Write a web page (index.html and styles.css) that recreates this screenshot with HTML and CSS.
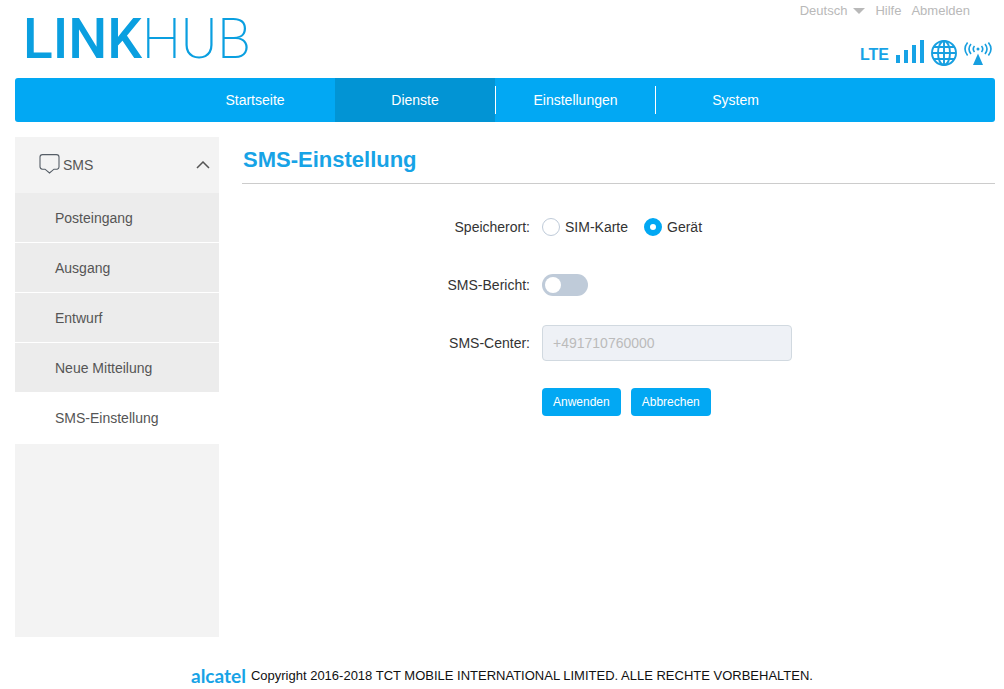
FILE: index.html
```html
<!DOCTYPE html>
<html lang="de">
<head>
<meta charset="utf-8">
<meta name="viewport" content="width=device-width, initial-scale=1">
<title>LINKHUB – SMS-Einstellung</title>
<link rel="stylesheet" href="styles.css">
</head>
<body>
<div class="page">
  <header class="header">
    <a class="logo" href="#"><span class="logo-bold">LINK</span><span class="logo-thin">HUB</span></a>
    <div class="header-side">
      <div class="tools">
        <button class="language" type="button">Deutsch
          <svg width="12" height="6" viewBox="0 0 12 6" aria-hidden="true"><path d="M0 0h12L6 6z" fill="#b9b9b9"/></svg>
        </button>
        <a href="#">Hilfe</a>
        <a href="#">Abmelden</a>
      </div>
      <div class="status">
        <span class="network">LTE</span>
        <svg width="28" height="28" viewBox="0 0 28 28" fill="#17a3e6" aria-hidden="true"><path d="M0 16h4v8H0zM8 11h4v13H8zM16 6h4v18h-4zM24 1h4v23h-4z"/></svg>
        <svg width="26" height="26" viewBox="0 0 26 26" fill="none" stroke="#179fe0" stroke-width="1.9" aria-hidden="true"><circle cx="13" cy="13" r="12"/><ellipse cx="13" cy="13" rx="6" ry="12"/><path d="M13 1v24M1 13h24M3 7h20M3 19h20"/></svg>
        <svg width="28" height="26" viewBox="0 0 28 26" fill="none" stroke="#179fe0" stroke-width="1.6" aria-hidden="true"><path d="M3.600 2.500Q-1.600 9 3.600 15.500M7 4Q3 9 7 14M10.500 6Q8 9 10.500 12M17.500 6Q20 9 17.500 12M21 4Q25 9 21 14M24.400 2.500Q29.600 9 24.400 15.500"/><circle cx="14" cy="9" r="1.500" fill="#179fe0" stroke="none"/><path d="M14 13.500L19 25H9z" fill="#179fe0" stroke="none"/></svg>
      </div>
    </div>
  </header>

  <nav class="nav" aria-label="Hauptmenü">
    <a class="nav-item" href="#">Startseite</a>
    <a class="nav-item active" href="#" aria-current="page">Dienste</a>
    <a class="nav-item" href="#">Einstellungen</a>
    <a class="nav-item" href="#">System</a>
  </nav>

  <div class="content">
    <aside class="sidebar">
      <button class="group" type="button" aria-expanded="true">
        <svg width="21" height="22" viewBox="0 0 21 22" fill="none" stroke="#555d66" stroke-width="1.100" aria-hidden="true"><path d="M3.500 .6h14q2.500 0 2.500 2.500v10q0 1.600-1.800 2.100h-3.200L10.500 19 6 15.200H3.500q-2.500-.5-2.500-2.500V3.100Q1 .6 3.500 .6z"/></svg>
        <span>SMS</span>
        <svg class="chevron" width="14" height="8" viewBox="0 0 14 8" fill="none" stroke="#555" stroke-width="1.500" aria-hidden="true"><path d="M1 7l6-6 6 6"/></svg>
      </button>
      <ul class="menu">
        <li><a href="#">Posteingang</a></li>
        <li><a href="#">Ausgang</a></li>
        <li><a href="#">Entwurf</a></li>
        <li><a href="#">Neue Mitteilung</a></li>
        <li><a class="current" href="#" aria-current="page">SMS-Einstellung</a></li>
      </ul>
    </aside>

    <main class="main">
      <h1 class="title">SMS-Einstellung</h1>
      <form class="form">
        <div class="row" role="radiogroup" aria-labelledby="storage">
          <span class="label" id="storage">Speicherort:</span>
          <div class="options">
            <label class="option"><input class="radio" type="radio" name="storage" value="sim">SIM-Karte</label>
            <label class="option"><input class="radio" type="radio" name="storage" value="device" checked>Gerät</label>
          </div>
        </div>
        <div class="row">
          <label class="label" for="report">SMS-Bericht:</label>
          <input class="switch" id="report" type="checkbox" role="switch">
        </div>
        <div class="row">
          <label class="label" for="center">SMS-Center:</label>
          <input class="field" id="center" type="text" value="+491710760000" disabled>
        </div>
        <div class="row">
          <div class="actions">
            <button class="button" type="submit">Anwenden</button>
            <button class="button" type="button">Abbrechen</button>
          </div>
        </div>
      </form>
    </main>
  </div>
</div>
<footer class="footer"><span class="brand">alcatel</span><span>Copyright 2016-2018 TCT MOBILE INTERNATIONAL LIMITED. ALLE RECHTE VORBEHALTEN.</span></footer>
</body>
</html>
```
FILE: styles.css
```css
* { box-sizing: border-box; }

body {
  margin: 0;
  background: #fff;
  color: #333;
  font-family: "Liberation Sans", Arial, sans-serif;
  font-size: 14px;
  line-height: 20px;
}

a { color: inherit; text-decoration: none; }
button { font: inherit; cursor: pointer; }
svg { display: block; flex: none; }

.page { padding: 0 9px 0 15px; }

.header {
  display: flex;
  justify-content: space-between;
  min-height: 78px;
}

.logo {
  display: flex;
  align-items: baseline;
  padding: 11px 0 0 8px;
  color: #0a9fe0;
  font-family: Roboto, sans-serif;
  font-size: 55px;
  line-height: 56px;
  white-space: nowrap;
}
.logo-bold { font-weight: 500; }
.logo-thin { font-weight: 200; }

.header-side {
  display: flex;
  flex-direction: column;
  align-items: flex-end;
  gap: 17px;
}
.tools {
  display: flex;
  gap: 10px;
  padding-right: 25px;
  color: #b9b9b9;
  font-size: 13px;
  line-height: 22px;
}
.language {
  display: flex;
  align-items: center;
  gap: 6px;
  padding: 0;
  border: 0;
  background: none;
  color: inherit;
}
.status {
  display: flex;
  align-items: center;
  gap: 7px;
  padding-right: 3px;
}
.network {
  padding-top: 3px;
  color: #17a3e6;
  font-size: 16px;
  font-weight: 700;
}

.nav {
  display: flex;
  padding-left: 160px;
  border-radius: 3px;
  background: #02a8f3;
  color: #fff;
}
.nav-item {
  display: flex;
  align-items: center;
  flex: 0 1 160px;
  justify-content: center;
  height: 44px;
}
.nav-item.active { background: #0294d4; }
.nav-item.active ~ .nav-item::before {
  content: "";
  width: 1px;
  height: 28px;
  margin-right: auto;
  background: #fff;
}
.nav-item.active ~ .nav-item::after {
  content: "";
  margin-left: auto;
}

.content {
  display: flex;
  gap: 23px;
  padding-top: 15px;
}

.sidebar {
  flex: none;
  width: 204px;
  min-height: 500px;
  background: #f3f3f3;
  color: #555;
}
.group {
  display: flex;
  align-items: center;
  gap: 3px;
  width: 100%;
  height: 56px;
  padding: 0 9px 0 24px;
  border: 0;
  background: none;
  color: inherit;
}
.chevron { margin-left: auto; }
.menu { margin: 0; padding: 0; list-style: none; }
.menu a {
  display: block;
  padding: 15px 40px 14px;
  border-bottom: 1px solid #fff;
  background: #ececec;
}
.menu .current { padding-bottom: 15px; background: #fff; }

.main { flex: 1; }
.title {
  margin: 0;
  padding: 8px 1px 9px;
  border-bottom: 1px solid #ccc;
  color: #17a3e6;
  font-size: 22px;
  line-height: 29px;
}
.form {
  display: grid;
  gap: 22px;
  padding-top: 25px;
}
.row {
  display: grid;
  grid-template-columns: 288px 1fr;
  column-gap: 12px;
  align-items: center;
  min-height: 36px;
}
.label { text-align: right; }
.options { display: flex; gap: 16px; }
.option { display: flex; align-items: center; gap: 5px; }

.radio {
  appearance: none;
  width: 18px;
  height: 18px;
  margin: 0;
  border: 1px solid #bfcbd9;
  border-radius: 50%;
  background: #fff;
}
.radio:checked { border: 6px solid #02a8f3; }

.switch {
  appearance: none;
  display: flex;
  align-items: center;
  width: 46px;
  height: 22px;
  margin: 0;
  padding: 0 3px;
  border-radius: 11px;
  background: #bfcbd9;
}
.switch::before {
  content: "";
  width: 16px;
  height: 16px;
  border-radius: 50%;
  background: #fff;
}
.switch:checked { justify-content: flex-end; background: #02a8f3; }

.field {
  width: 250px;
  height: 36px;
  padding: 0 10px;
  border: 1px solid #d1d9e0;
  border-radius: 4px;
  background: #eef1f6;
  color: #bbb;
  font: inherit;
}

.actions { grid-column: 2; display: flex; gap: 10px; padding-top: 2px; }
.button {
  height: 28px;
  padding: 0 11px;
  border: 0;
  border-radius: 4px;
  background: #02a8f3;
  color: #fff;
  font-size: 12px;
}

.footer {
  display: flex;
  align-items: center;
  justify-content: center;
  gap: 5px;
  padding: 29px 0 3px;
  color: #111;
  font-size: 13px;
}
.brand {
  color: #17a3e6;
  font-family: Lato, sans-serif;
  font-size: 19px;
  font-weight: 700;
}
```
